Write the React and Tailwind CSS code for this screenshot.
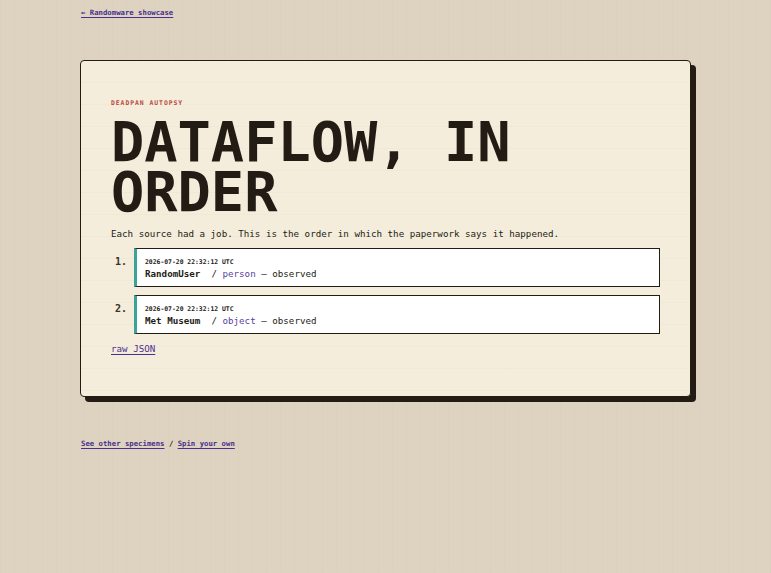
export default function App() {
  const mono = { fontFamily: '"DejaVu Sans Mono", "Liberation Mono", monospace' };
  const items = [
    { n: "1.", ts: "2026-07-20 22:32:12 UTC", src: "RandomUser", kind: "person" },
    { n: "2.", ts: "2026-07-20 22:32:12 UTC", src: "Met Museum", kind: "object" },
  ];
  return (
    <div
      style={mono}
      className="min-h-screen w-full bg-[#ddd3c0] bg-[repeating-linear-gradient(90deg,rgba(120,100,70,0.02)_0px,rgba(120,100,70,0.02)_1px,transparent_1px,transparent_14px)] text-[#231c14] pl-[80px] pt-[8px]"
    >
      <a
        href="#"
        className="ml-[1px] block w-fit text-[7.3px] leading-[10px] font-bold text-[#4b2f8f] underline underline-offset-[2px] decoration-[1px]"
      >
        ← Randomware showcase
      </a>

      <div className="mt-[42px] w-[611px] rounded-[4px] border-[1.5px] border-[#231c14] bg-[#f4eddc] bg-[repeating-linear-gradient(180deg,transparent_0px,transparent_21px,rgba(150,120,80,0.035)_21px,rgba(150,120,80,0.035)_22px)] shadow-[5px_5px_0_#231c14] px-[30px] pt-[37px] pb-[40px]">
        <div className="text-[6.4px] leading-[10px] font-bold tracking-[0.96px] text-[#b94a3e]">
          DEADPAN AUTOPSY
        </div>
        <h1 className="mt-[9px] text-[55.3px] leading-[50px] font-bold text-[#231c14]">
          DATAFLOW, IN
          <br />
          ORDER
        </h1>
        <p className="mt-[10px] text-[9.2px] leading-[14px]">
          Each source had a job. This is the order in which the paperwork says it happened.
        </p>
        <ol className="mt-[7px] flex flex-col gap-[8px]">
          {items.map((it) => (
            <li key={it.n} className="flex">
              <div className="w-[23px] shrink-0 pr-[7px] pt-[7px] text-right text-[10px] leading-[13px] font-bold text-[#3a322a]">
                {it.n}
              </div>
              <div className="flex-1 border border-[#231c14] border-l-[3px] border-l-[#3aa39a] bg-white pl-[8px] pt-[9px] pb-[6px]">
                <div className="text-[6.4px] leading-[9px] font-bold text-[#231c14]">{it.ts}</div>
                <div className="whitespace-pre text-[9.2px] leading-[13px] text-[#231c14]">
                  <span className="font-bold">{it.src}</span>
                  {"  / "}
                  <span className="text-[#5a3fa0]">{it.kind}</span>
                  {" — observed"}
                </div>
              </div>
            </li>
          ))}
        </ol>
        <a
          href="#"
          className="mt-[8px] block w-fit text-[9.2px] leading-[14px] text-[#4b2f8f] underline underline-offset-[2px] decoration-[1px]"
        >
          raw JSON
        </a>
      </div>

      <div className="ml-[1px] mt-[42px] text-[7.3px] leading-[10px] font-bold text-[#231c14]">
        <a href="#" className="text-[#4b2f8f] underline underline-offset-[2px] decoration-[1px]">
          See other specimens
        </a>
        {" / "}
        <a href="#" className="text-[#4b2f8f] underline underline-offset-[2px] decoration-[1px]">
          Spin your own
        </a>
      </div>
    </div>
  );
}
